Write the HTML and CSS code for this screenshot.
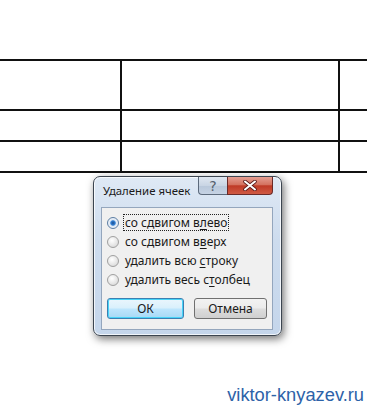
FILE: index.html
```html
<!DOCTYPE html>
<html lang="ru">
<head>
<meta charset="utf-8">
<link rel="stylesheet" href="styles.css">
</head>
<body>
<div class="sheet">
  <div class="row row-tall"><div class="cell c1"></div><div class="cell c2"></div><div class="cell c3"></div></div>
  <div class="row"><div class="cell c1"></div><div class="cell c2"></div><div class="cell c3"></div></div>
  <div class="row"><div class="cell c1"></div><div class="cell c2"></div><div class="cell c3"></div></div>
</div>
<div class="dialog">
  <div class="titlebar">
    <span class="title">Удаление ячеек</span>
    <div class="caption-btns">
      <div class="cbtn help">?</div>
      <div class="cbtn close">
        <svg width="14" height="11" viewBox="0 0 14 11"><path d="M2 1.5 L12 9.5 M12 1.5 L2 9.5" stroke="#5a1a1a" stroke-width="3.6" stroke-linecap="round"/><path d="M2 1.5 L12 9.5 M12 1.5 L2 9.5" stroke="#fff" stroke-width="2" stroke-linecap="round"/></svg>
      </div>
    </div>
  </div>
  <div class="panel">
    <div class="options">
      <div class="opt"><span class="radio checked"></span><span class="label focus">со сдвигом в<u>л</u>ево</span></div>
      <div class="opt"><span class="radio"></span><span class="label">со сдвигом в<u>в</u>ерх</span></div>
      <div class="opt"><span class="radio"></span><span class="label">удалить всю <u>с</u>троку</span></div>
      <div class="opt"><span class="radio"></span><span class="label">удалить весь с<u>т</u>олбец</span></div>
    </div>
    <div class="buttons">
      <div class="btn default">ОК</div>
      <div class="btn">Отмена</div>
    </div>
  </div>
</div>
<div class="footer">viktor-knyazev.ru</div>
</body>
</html>
```
FILE: styles.css
```css
html, body {
  margin: 0;
  padding: 0;
  background: #fff;
  width: 367px;
  height: 414px;
  overflow: hidden;
}
body {
  font-family: "Noto Sans", "Open Sans", sans-serif;
}
.sheet {
  margin-top: 59px;
  border-top: 2px solid #111;
  width: 100%;
}
.row {
  display: flex;
  height: 29px;
  border-bottom: 2px solid #111;
}
.row-tall {
  height: 48px;
}
.cell {
  border-right: 2px solid #111;
}
.c1 { width: 120px; }
.c2 { width: 216px; }
.c3 { flex: 1; border-right: none; }

.dialog {
  margin: 3px 0 0 93px;
  width: 189px;
  height: 160px;
  border: 1px solid #3c4550;
  border-radius: 7px;
  background: linear-gradient(180deg, #dfe9f5 0%, #cddcee 40%, #c5d6eb 100%);
  box-shadow: 2px 3px 8px rgba(0,0,0,0.55), inset 0 0 0 1px rgba(255,255,255,0.75);
  box-sizing: border-box;
  display: flex;
  flex-direction: column;
}
.titlebar {
  height: 30px;
  display: flex;
  justify-content: space-between;
  align-items: flex-start;
  padding-left: 9px;
  padding-right: 8px;
}
.title {
  margin-top: 6px;
  font-size: 11.4px;
  color: #1a1a1a;
  white-space: nowrap;
}
.caption-btns {
  display: flex;
  flex: none;
}
.cbtn {
  height: 18px;
  box-sizing: border-box;
  border: 1px solid #5c6a7c;
  border-top: none;
  display: flex;
  align-items: center;
  justify-content: center;
}
.help {
  width: 29px;
  border-radius: 0 0 0 4px;
  border-right: none;
  background: linear-gradient(180deg, #dfe7f1 0%, #c9d5e4 50%, #b8c7da 51%, #c6d3e4 100%);
  color: #56606d;
  font-family: "DejaVu Sans", sans-serif;
  font-size: 14px;
}
.close {
  width: 46px;
  border-radius: 0 0 4px 0;
  border-color: #6a2a28;
  background: linear-gradient(180deg, #e59e92 0%, #d4725f 45%, #bf3a26 52%, #cf5a44 100%);
}
.panel {
  margin: 0 8px 5px 7px;
  flex: 1;
  background: #f0f0f0;
  border: 1px solid #94a6bd;
  display: flex;
  flex-direction: column;
  padding: 5px 0 0 5px;
}
.options {
  display: flex;
  flex-direction: column;
}
.opt {
  display: flex;
  align-items: center;
  height: 19px;
  font-size: 12px;
  color: #1a1a1a;
}
.radio {
  width: 12px;
  height: 12px;
  border-radius: 50%;
  border: 1px solid #a0a0a0;
  background: radial-gradient(circle at 40% 35%, #ffffff 0%, #e4e4e4 60%, #cfcfcf 100%);
  box-sizing: border-box;
  margin-right: 4px;
  flex: none;
}
.radio.checked {
  border-color: #5d7ea3;
  background: radial-gradient(circle at 50% 50%, #1c4f8e 0%, #2f7ad0 28%, #4a90d8 34%, #dfe9f5 45%, #f5f8fc 100%);
}
.label {
  padding: 0 1px;
  line-height: 15px;
  border: 1px dotted transparent;
}
.label.focus {
  border-color: #222;
}
.label u {
  text-decoration-thickness: 1px;
  text-underline-offset: 2px;
}
.buttons {
  display: flex;
  gap: 10px;
  margin-top: 9px;
}
.btn {
  width: 73px;
  height: 21px;
  box-sizing: border-box;
  border: 1px solid #707070;
  border-radius: 3px;
  background: linear-gradient(180deg, #f2f2f2 0%, #ebebeb 48%, #dddddd 52%, #cfcfcf 100%);
  display: flex;
  align-items: center;
  justify-content: center;
  font-size: 12px;
  color: #1a1a1a;
}
.btn.default {
  width: 77px;
  border: 1px solid #3c7fb1;
  box-shadow: inset 0 0 0 1px #48d4f8;
  background: linear-gradient(180deg, #eaf6fd 0%, #d9f0fc 48%, #bee6fd 52%, #a7d9f5 100%);
}
.footer {
  text-align: right;
  padding-right: 3px;
  margin-top: 48px;
  font-family: "Liberation Sans", Arial, sans-serif;
  font-size: 18.3px;
  color: #2d62a8;
}
```
